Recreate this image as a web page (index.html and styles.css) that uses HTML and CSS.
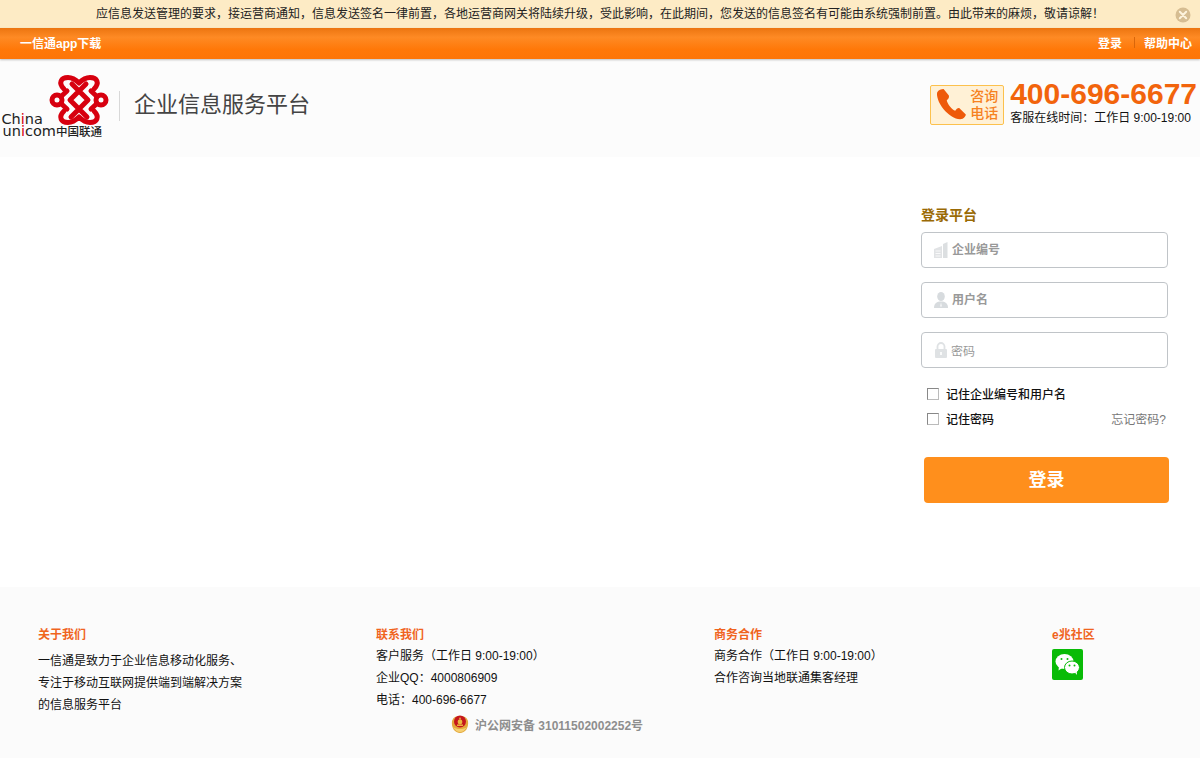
FILE: index.html
```html
<!DOCTYPE html>
<html lang="zh">
<head>
<meta charset="utf-8">
<title>企业信息服务平台</title>
<link rel="stylesheet" href="styles.css">
</head>
<body>
<div class="notice">
  <p class="notice-text">应信息发送管理的要求，接运营商通知，信息发送签名一律前置，各地运营商网关将陆续升级，受此影响，在此期间，您发送的信息签名有可能由系统强制前置。由此带来的麻烦，敬请谅解！</p>
  <svg class="notice-close" viewBox="0 0 16 16" width="16" height="16"><circle cx="8" cy="8" r="7.5" fill="#d6bd92"/><path d="M4.8 4.8l6.4 6.4M11.2 4.8l-6.4 6.4" stroke="#fdf3dc" stroke-width="2" stroke-linecap="round"/></svg>
</div>
<div class="topbar">
  <a class="topbar-link">一信通app下载</a>
  <div class="topbar-right"><a class="topbar-link">登录</a><span class="topbar-sep"></span><a class="topbar-link">帮助中心</a></div>
</div>
<header class="header">
  <div class="brand">
    <svg class="logo" viewBox="0 0 110 66" width="110" height="66">
      <g fill="none" stroke="#d7000f" stroke-width="5" stroke-linecap="round" stroke-linejoin="round">
        <path d="M64 16 C58 10 61 4.500 68 4.500 C73 4.500 76 7 79 10 C82 7 85 4.500 90 4.500 C97 4.500 100 10 94 16"/>
        <path d="M64 38 C58 44 61 49.500 68 49.500 C73 49.500 76 47 79 44 C82 47 85 49.500 90 49.500 C97 49.500 100 44 94 38"/>
        <path d="M72 11 L88 27 L71 44 M86 11 L70 27 L87 44"/>
        <circle cx="57" cy="27" r="5"/>
        <circle cx="101" cy="27" r="5"/>
        <path d="M61 23.500 L67 18 M61 30.500 L67 36 M97 23.500 L91 18 M97 30.500 L91 36"/>
      </g>
      <text class="logo-latin" x="1.500" y="50.500">Ch<tspan fill="#d7000f">i</tspan>na</text>
      <text class="logo-latin" x="2.500" y="63">un<tspan fill="#d7000f">i</tspan>com</text>
      <text class="logo-cn" x="56" y="63">中国联通</text>
    </svg>
    <span class="brand-sep"></span>
    <h1 class="brand-title">企业信息服务平台</h1>
  </div>
  <div class="contact">
    <div class="hotline-badge">
      <svg viewBox="0 0 34 34" width="36" height="36"><path d="M4 5 C3 8 5 15 10 21 C15 27 23 32 28 30 C30 29 31 27 31 26 L25 20 C23.500 19.500 22 21 21 22.500 C18 21.500 13.500 16 13 12.500 C14.500 11.500 15.500 10 15 8 L10 2 C8 2 5 3 4 5 Z" fill="#ee5a0a"/></svg>
      <span class="hotline-label">咨询<br>电话</span>
    </div>
    <div class="hotline-info">
      <div class="hotline-number">400-696-6677</div>
      <div class="hotline-hours">客服在线时间：工作日 9:00-19:00</div>
    </div>
  </div>
</header>
<main class="main">
  <form class="login">
    <h2 class="login-title">登录平台</h2>
    <label class="field">
      <svg viewBox="0 0 16 16" width="16" height="16"><path d="M1 7l8-3v12H1z" fill="#e1e3e5"/><path d="M10 2l4.500-2v16H10z" fill="#dcdfe1"/><path d="M2.500 9h5M2.500 11.500h5M2.500 14h5" stroke="#fff" stroke-width=".8"/></svg>
      <span class="field-text">企业编号</span>
    </label>
    <label class="field">
      <svg viewBox="0 0 16 16" width="16" height="16"><ellipse cx="8" cy="4.500" rx="3.800" ry="4.500" fill="#d7dbde"/><path d="M1 16c0-5 3-6.500 7-6.500s7 1.500 7 6.500z" fill="#d7dbde"/><path d="M8 10.500l-.8 4h1.600z" fill="#fff"/></svg>
      <span class="field-text">用户名</span>
    </label>
    <label class="field field-pass">
      <svg viewBox="0 0 16 16" width="16" height="16"><path d="M4.500 7V4.500a3.500 3.500 0 0 1 7 0V7" fill="none" stroke="#dfe2e4" stroke-width="1.800"/><rect x="2" y="7" width="12" height="9" rx="1" fill="#dfe2e4"/><rect x="7.200" y="10" width="1.600" height="3" fill="#fff"/></svg>
      <span class="field-text">密码</span>
    </label>
    <div class="check-row"><span class="check"></span><span>记住企业编号和用户名</span></div>
    <div class="check-row check-row-second"><span class="check"></span><span>记住密码</span><a class="forgot">忘记密码?</a></div>
    <button class="submit" type="button">登录</button>
  </form>
</main>
<footer class="footer">
  <div class="footer-cols">
    <section class="col col-about">
      <h3 class="col-title">关于我们</h3>
      <p class="col-line">一信通是致力于企业信息移动化服务、</p>
      <p class="col-line">专注于移动互联网提供端到端解决方案</p>
      <p class="col-line">的信息服务平台</p>
    </section>
    <section class="col">
      <h3 class="col-title">联系我们</h3>
      <p class="col-line">客户服务（工作日 9:00-19:00）</p>
      <p class="col-line">企业QQ：4000806909</p>
      <p class="col-line">电话：400-696-6677</p>
    </section>
    <section class="col">
      <h3 class="col-title">商务合作</h3>
      <p class="col-line">商务合作（工作日 9:00-19:00）</p>
      <p class="col-line">合作咨询当地联通集客经理</p>
    </section>
    <section class="col">
      <h3 class="col-title">e兆社区</h3>
      <svg class="wechat" viewBox="0 0 31 31" width="31" height="31"><rect width="31" height="31" rx="2" fill="#09bb07"/><ellipse cx="12.500" cy="12.500" rx="9" ry="7.500" fill="#fff"/><path d="M7 17l-.5 4.500 4.500-3z" fill="#fff"/><ellipse cx="20" cy="18.500" rx="7.500" ry="6.500" fill="#fff" stroke="#09bb07"/><path d="M23 23.500l2 2.500-.3-4z" fill="#fff"/><circle cx="9.500" cy="10" r="1" fill="#09bb07"/><circle cx="15.500" cy="10" r="1" fill="#09bb07"/><circle cx="17.500" cy="16.500" r="1" fill="#09bb07"/><circle cx="22.500" cy="16.500" r="1" fill="#09bb07"/></svg>
    </section>
  </div>
  <div class="beian">
    <svg viewBox="0 0 18 20" width="18" height="20"><path d="M1 7c-1 7 3 12 8 12s9-5 8-12c-1-3-3-5-8-5S2 4 1 7z" fill="#e3a93c"/><path d="M2 13c2 3 4 5 7 5s5-2 7-5c-2 1.500-4 2-7 2s-5-.5-7-2z" fill="#f6cf72"/><circle cx="9" cy="7.500" r="6" fill="#c5161d"/><path d="M9 3l1.200 2.500h-2.400z" fill="#f0c040"/><circle cx="9" cy="8" r="2.400" fill="#e9b840"/><rect x="6" y="10.500" width="6" height="1.400" fill="#f0c040"/></svg>
    <span>沪公网安备 31011502002252号</span>
  </div>
</footer>
</body>
</html>
```

FILE: styles.css
```css
* { box-sizing: border-box; }
html, body { margin: 0; padding: 0; }
body {
  width: 1200px;
  height: 758px;
  overflow: hidden;
  background: #fff;
  color: #000;
  font-family: "Liberation Sans", "Noto Sans CJK SC", sans-serif;
  font-size: 12px;
}
h1, h2, h3, p { margin: 0; font-weight: normal; }

.notice {
  height: 28px;
  background: #fdebc5;
  display: flex;
  align-items: center;
  justify-content: center;
  position: relative;
}
.notice-text { color: #222; font-size: 12px; line-height: 28px; }
.notice-close { position: absolute; right: 9px; top: 7px; }

.topbar {
  height: 31px;
  background: linear-gradient(#ec7510, #fe8a24 30%, #ff7808 70%, #fd7507);
  display: flex;
  justify-content: space-between;
  align-items: center;
  padding: 0 8px 3px 20px;
  box-shadow: 0 1px 2px rgba(0,0,0,.25);
  position: relative;
}
.topbar-link { color: #fff; font-weight: bold; font-size: 12px; }
.topbar-right { display: flex; align-items: center; }
.topbar-sep { width: 1px; height: 11px; background: #d9660a; margin: 0 9px 0 12px; }

.header {
  height: 98px;
  background: #fcfcfc;
  display: flex;
  justify-content: space-between;
}
.brand { display: flex; align-items: flex-start; }
.logo { margin-top: 14px; margin-right: -6px; flex: none; display: block; }
.logo-latin { font-family: "DejaVu Sans", sans-serif; font-size: 14.500px; fill: #222; }
.logo-cn { font-family: "Noto Sans CJK SC", sans-serif; font-size: 11.500px; font-weight: 500; fill: #222; }
.brand-sep { width: 1px; height: 30px; background: #d8d8d8; margin: 32px 14px 0 15px; }
.brand-title {
  font-size: 22px;
  line-height: 30px;
  margin-top: 31px;
  color: #444;
}
.contact { display: flex; align-items: flex-start; padding: 18px 3px 0 0; }
.hotline-badge {
  width: 74px;
  height: 40px;
  margin: 8px 6px 0 0;
  background: #fff1d6;
  border: 1px solid #fcc14d;
  border-radius: 2px;
  display: flex;
  align-items: center;
  padding-left: 2px;
}
.hotline-badge svg { flex: none; }
.hotline-label {
  color: #f6821f;
  font-size: 14px;
  line-height: 17px;
  font-weight: 500;
  margin-left: 1px;
}
.hotline-number {
  color: #f2640c;
  font-size: 30px;
  line-height: 34px;
  font-weight: bold;
  white-space: nowrap;
}
.hotline-hours { font-size: 12px; line-height: 16px; margin-top: -1px; color: #111; }

.main {
  height: 430px;
  padding: 48px 31px 0 921px;
}
.login { width: 248px; }
.login-title { font-size: 14px; font-weight: bold; color: #9a6a05; line-height: 20px; margin-bottom: 7px; }
.field {
  display: flex;
  align-items: center;
  width: 247px;
  height: 36px;
  border: 1px solid #c0c4c8;
  border-radius: 4px;
  margin-bottom: 14px;
  padding-left: 11px;
  background: #fff;
}
.field-pass { margin-bottom: 15px; }
.field-text { color: #999; font-size: 12px; font-weight: bold; margin: 0 0 4px 3px; }
.field-pass .field-text { font-weight: normal; margin: 0 0 0 2px; }
.check-row {
  display: flex;
  align-items: center;
  height: 20px;
  padding-left: 6px;
  font-size: 12px;
  color: #111;
  font-weight: 500;
  width: 245px;
}
.check-row-second { margin-top: 5px; }
.check {
  width: 12px;
  height: 12px;
  margin: 2px 7px 0 0;
  border: 1px solid #888;
  border-right-color: #bbb;
  border-bottom-color: #bbb;
  background: #fff;
  flex: none;
}
.forgot { margin-left: auto; color: #777; font-weight: normal; }
.submit {
  display: block;
  width: 245px;
  height: 46px;
  margin: 29px 0 0 3px;
  padding: 0 0 4px;
  border: 0;
  border-radius: 4px;
  background: #ff8f1c;
  color: #fff;
  font: bold 18px "Liberation Sans", "Noto Sans CJK SC", sans-serif;
}

.footer {
  height: 171px;
  background: #fbfbfb;
  padding: 40px 0 0 38px;
  position: relative;
}
.footer-cols { display: grid; grid-template-columns: 338px 338px 338px 1fr; }
.col-title { font-size: 12px; line-height: 17px; font-weight: bold; color: #f0641e; margin-bottom: 1px; }
.col-about .col-title { margin-bottom: 6px; }
.col-line { font-size: 12px; line-height: 22px; color: #111; }
.wechat { display: block; margin-top: 5px; }
.beian {
  position: absolute;
  left: 451px;
  top: 127px;
  display: flex;
  align-items: center;
  color: #8e8e8e;
  font-size: 12px;
  font-weight: bold;
}
.beian span { margin-left: 6px; }
```
